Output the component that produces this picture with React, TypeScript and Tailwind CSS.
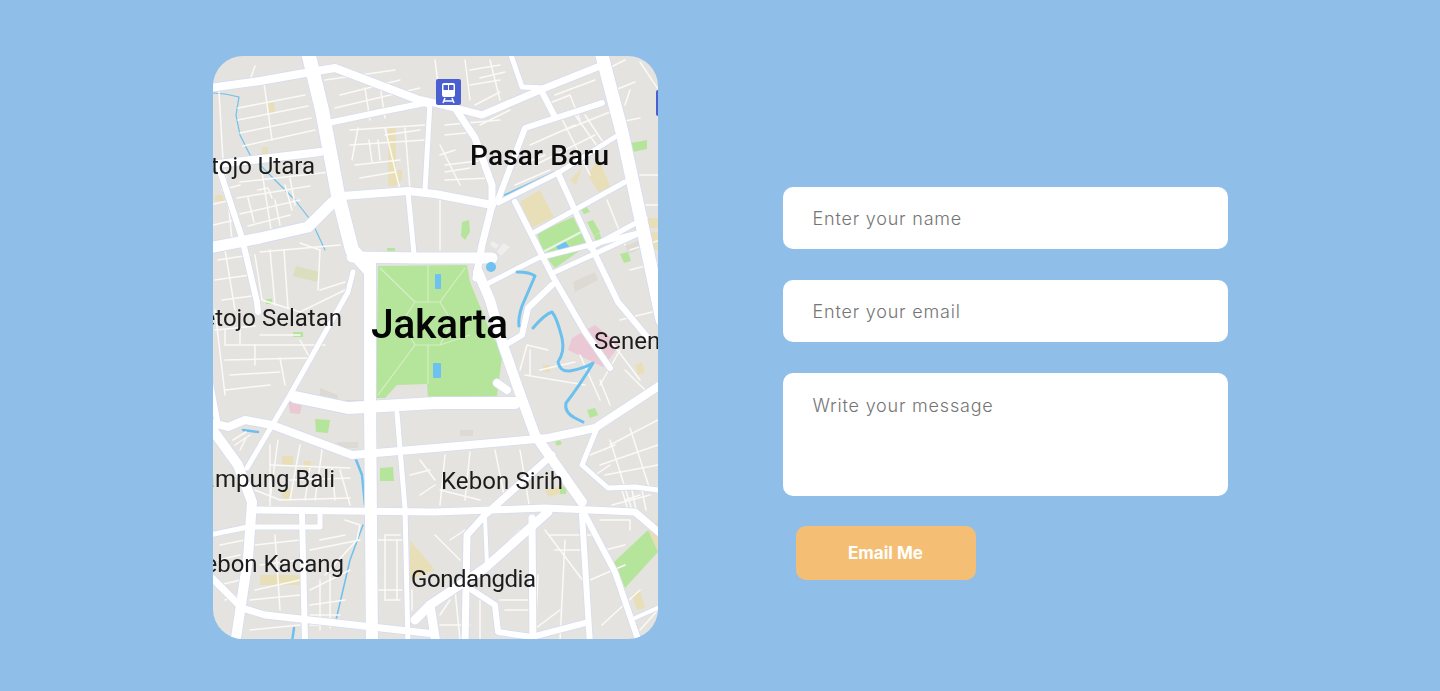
const majorRoads: [string, number][] = [
  ["308,52 322,110 338,195 352,250 368,268", 14],
  ["352,257 420,258 492,258", 11],
  ["370,258 370,400 371,520 372,645", 12],
  ["209,88 260,81 305,73 335,68 427,103", 8],
  ["328,123 380,112 425,103", 6],
  ["209,248 260,238 308,227 333,202", 11],
  ["320,152 270,158 209,165", 8],
  ["218,165 242,238 257,302 258,312", 6],
  ["342,196 408,191 435,194 492,205", 8],
  ["408,192 414,254", 5],
  ["430,102 425,190", 5],
  ["601,52 622,132 642,225 662,320", 13],
  ["422,100 455,108 482,115 545,88 600,66", 7],
  ["455,108 475,138 492,185 492,205 482,245 476,278", 7],
  ["510,52 522,87 545,88", 5],
  ["542,92 555,117", 6],
  ["498,200 525,128 602,103", 6],
  ["498,203 558,173 615,137", 5],
  ["515,202 552,275 585,332 610,368", 6],
  ["558,173 592,248 618,302 648,338", 6],
  ["535,232 625,182", 5],
  ["485,285 538,258 642,232", 5],
  ["590,248 645,218", 5],
  ["555,272 640,233", 5],
  ["552,285 528,308 522,335 505,345", 6],
  ["662,384 595,428 548,438 435,448 352,455 272,425 245,420 228,427 209,422", 8],
  ["478,272 490,300 503,345 518,388 535,435 582,502", 10],
  ["295,397 348,408 435,403 515,403", 12],
  ["497,383 507,390", 8],
  ["209,535 248,527 320,527 320,510", 5],
  ["257,510 435,512 545,508 635,512 662,535", 7],
  ["552,455 485,515 467,535 465,645", 7],
  ["548,512 485,568 430,605", 9],
  ["532,518 533,645", 7],
  ["485,518 487,565", 4],
  ["582,515 590,645", 6],
  ["585,515 615,572 640,645", 6],
  ["472,590 495,605 498,632 532,637 585,623", 6],
  ["597,428 582,465 608,488 635,487 658,490", 5],
  ["662,606 635,618", 4],
  ["209,378 218,425", 6],
  ["209,425 238,465 252,502 248,558 235,645", 10],
  ["302,515 305,640", 6],
  ["209,575 242,608 265,615 435,634", 7],
  ["397,413 405,508 408,645", 5],
  ["353,272 348,292 322,338 290,395 247,468", 5],
  ["415,620 430,605 437,650", 9],
];

const minorStreets = [
  "238,108 305,95", "238,120 308,106", "240,133 311,118", "243,146 315,130", "264,83 272,140", "219,92 223,160",
  "250,80 255,66", "325,80 395,70", "340,95 400,80", "335,108 420,88", "365,88 370,120", "380,85 385,118",
  "350,130 425,125", "350,145 425,140", "385,128 400,190", "355,165 400,160", "360,178 395,172", "420,130 385,135",
  "358,128 352,160", "369,140 372,162", "378,140 380,160", "405,128 410,190",
  "240,182 330,172", "237,198 310,186", "240,214 300,200", "248,226 290,215", "262,172 272,236", "290,178 295,205", "222,190 240,185", "210,205 232,200", "213,225 235,220",
  "258,190 268,188 272,198", "285,185 292,210", "248,198 254,222", "275,200 280,225", "225,170 232,240",
  "260,252 340,245", "300,243 320,250", "320,250 318,290", "255,255 262,300", "270,250 275,305", "284,250 288,308", "262,300 300,312", "300,312 345,290", "320,290 345,282", "218,260 250,255", "215,280 250,275", "222,300 252,296", "225,250 235,310", "215,330 255,326",
  "435,60 440,100", "465,60 470,100", "470,70 500,65", "470,85 500,80", "475,105 500,92", "480,125 510,110", "445,125 500,120", "445,135 475,132", "490,60 500,100", "480,78 505,72",
  "545,105 570,95 580,120", "555,95 595,80", "605,70 625,60", "615,90 635,82", "620,122 640,118", "625,105 630,90", "640,62 660,92",
  "565,130 615,110", "560,115 590,175", "575,115 600,150", "585,115 605,145", "530,145 575,125", "535,165 595,135", "590,110 603,100",
  "440,145 460,185", "445,165 485,160", "445,180 490,178", "440,200 440,250", "520,165 545,155", "515,185 550,170", "440,155 455,150", "445,172 470,168",
  "607,200 625,245", "640,175 660,175", "638,205 660,205", "630,250 660,240", "620,320 660,310", "630,270 660,262",
  "225,345 325,345", "225,360 310,358", "230,375 280,372", "225,390 270,385", "255,345 255,365", "280,358 285,385", "215,310 225,395", "240,320 240,345", "260,335 300,335", "300,340 310,358", "225,330 225,345",
  "278,440 270,500", "300,445 290,500", "322,450 315,500", "270,465 350,468", "290,480 350,478", "280,500 350,498", "340,470 350,505", "255,490 280,500", "270,445 270,510", "310,468 305,500", "332,468 335,500",
  "233,440 246,432", "235,445 250,435", "240,450 246,438",
  "255,545 300,540", "260,565 300,560", "255,590 300,580", "250,600 300,595", "275,535 280,610", "320,540 345,535", "310,550 360,540", "345,520 360,525 357,540 325,575",
  "220,545 245,540", "218,560 240,555", "220,585 240,580", "225,600 240,595", "310,590 350,570", "310,605 345,600", "310,615 340,615", "310,625 335,625", "320,580 320,630", "330,575 330,628",
  "385,535 400,535", "385,535 385,600 400,600", "397,540 397,600", "410,475 430,470", "420,460 435,480", "420,495 435,485",
  "525,375 585,385", "540,370 575,362", "530,350 530,375", "610,340 640,380", "620,350 600,385", "600,380 610,405", "580,355 600,400", "520,370 527,345 548,350", "625,370 650,395",
  "445,455 440,505", "470,452 465,500", "495,450 505,500", "520,450 530,510", "610,445 658,420", "600,465 658,445", "605,475 658,465", "610,440 632,510", "630,428 650,490", "595,475 610,465", "590,455 615,445",
  "440,490 480,500", "625,500 640,495", "612,505 650,495", "622,490 628,510", "632,490 636,510", "642,490 646,510",
  "545,530 590,590", "550,535 595,535", "555,550 580,550", "565,540 560,640", "590,580 625,565", "602,625 640,590", "605,550 625,545", "520,530 470,580", "500,600 530,600", "538,575 535,640", "560,610 520,640", "640,630 658,610", "600,520 630,520 630,530",
  "435,535 460,560", "450,540 465,530", "440,625 470,625", "505,610 535,610", "455,590 460,640", "480,600 480,640",
  "250,630 300,625", "378,540 402,540", "378,590 402,590", "440,615 450,600", "412,590 412,610",
];

const buildings: [string, string][] = [
  ["#e8dfb9", "268,103 274,103 275,114 269,114"],
  ["#e8dfb9", "388,128 396,128 396,170 402,170 402,180 396,186 388,186"],
  ["#e8dfb9", "262,147 268,147 268,154 262,154"],
  ["#e8dfb9", "215,195 222,195 224,201 215,201"],
  ["#e8dfb9", "520,202 540,190 554,217 532,228"],
  ["#e8dfb9", "588,175 598,158 612,190 600,195"],
  ["#e8dfb9", "570,180 582,168 576,185"],
  ["#e8dfb9", "648,218 660,218 660,228 648,228"],
  ["#e8dfb9", "650,232 660,232 660,250 652,250"],
  ["#e8dfb9", "282,456 293,456 293,465 282,465"],
  ["#e8dfb9", "304,461 311,461 311,468 304,468"],
  ["#e8dfb9", "286,489 293,491 288,500 281,496"],
  ["#e8dfb9", "260,575 301,575 301,585 260,585"],
  ["#e8dfb9", "410,540 435,570 410,580"],
  ["#e8dfb9", "545,490 565,485 568,492 548,497"],
  ["#e8dfb9", "642,540 658,520 658,552"],
  ["#e8dfb9", "632,595 640,590 645,608 637,610"],
  ["#e8dfb9", "543,365 550,365 550,372 543,372"],
  ["#e8dfb9", "635,365 642,362 645,372 638,375"],
  ["#dcdfbf", "296,266 320,272 317,282 293,276"],
  ["#ebc9d4", "572,338 595,325 620,345 603,367 568,350"],
  ["#ebc9d4", "288,401 303,399 300,414 290,413"],
  ["#dcd9d2", "320,388 338,395 337,405 320,400"],
  ["#dcd9d2", "340,400 365,400 365,412 340,412"],
  ["#dddad4", "337,442 358,442 358,448 337,448"],
  ["#dddad4", "573,282 595,272 598,280 575,292"],
  ["#dddad4", "460,430 473,430 473,436 460,436"],
  ["#dddad4", "625,246 640,240 640,248 630,254"],
  ["#eeeeef", "492,241 499,245 496,249 490,245"],
  ["#eeeeef", "503,243 510,247 501,256 497,252"],
  ["#b5e59b", "462,222 469,220 470,232 465,240 461,236"],
  ["#b5e59b", "537,233 573,217 588,245 555,268 543,253"],
  ["#b5e59b", "580,208 586,206 590,212 584,214"],
  ["#b5e59b", "587,222 593,220 600,232 594,236"],
  ["#b5e59b", "594,236 600,233 602,243 597,245"],
  ["#b5e59b", "620,254 628,252 631,261 624,263"],
  ["#b5e59b", "631,143 647,140 647,149 633,152"],
  ["#b5e59b", "387,248 395,248 395,251 387,251"],
  ["#b5e59b", "266,299 272,299 272,304 266,304"],
  ["#b5e59b", "293,332 303,332 303,337 293,337"],
  ["#b5e59b", "315,419 330,420 328,433 316,432"],
  ["#b5e59b", "380,468 393,467 394,481 380,481"],
  ["#b5e59b", "587,410 595,408 598,415 590,418"],
  ["#b5e59b", "560,488 566,486 566,494 560,494"],
  ["#b5e59b", "614,562 648,530 658,552 625,588"],
  ["#b5e59b", "555,442 560,440 562,444 557,446"],
];

function StationIcon() {
  return (
    <g>
      <rect x="436" y="79" width="25" height="26" rx="2" fill="#4a5fd0" />
      <rect x="442" y="83" width="13" height="14" rx="2" fill="#fff" />
      <rect x="443.5" y="85" width="4.5" height="5" fill="#4a5fd0" />
      <rect x="449" y="85" width="4.5" height="5" fill="#4a5fd0" />
      <path d="M443 103 L445 98 M454 103 L452 98 M444 101 H453" stroke="#fff" strokeWidth="1.5" fill="none" />
    </g>
  );
}

function CityMap() {
  const labelClass = "font-['Roboto'] fill-[#1c1c1c]";
  return (
    <div className="w-[445px] h-[583px] rounded-[30px] overflow-hidden shrink-0 bg-[#e5e3df]">
      <svg viewBox="213 56 445 583" width="445" height="583" className="block blur-[0.4px]">
        {buildings.map(([fill, points], i) => (
          <polygon key={`building_${i}`} points={points} fill={fill} />
        ))}

        <polygon points="378,266 467,265 470,282 493,338 503,350 497,396 428,398 427,384 397,385 385,398 376,398" fill="#b5e59b" />
        <path d="M380 268 L415 302 M465 268 L440 302 M378 395 L415 345 M470 335 L440 345 M415 302 H440 L452 322 L440 345 H415 L402 322 Z M428 265 V302 M428 345 V384" stroke="#d5efc6" strokeWidth="1.2" fill="none" />
        <rect x="435" y="274" width="6" height="15" rx="1" fill="#6ec1f0" />
        <rect x="433" y="363" width="8" height="15" rx="1" fill="#6ec1f0" />
        <path d="M555 245 L565 241 L570 248 L560 252 Z" fill="#6ec1f0" />
        <path d="M543 252 L585 230" stroke="#e8f3e2" strokeWidth="2.5" />

        <g fill="none" strokeLinejoin="round" strokeLinecap="round">
          <polyline points="213,93 225,94 239,97 236,115 240,135 250,155 275,180 295,200 312,222 325,250" stroke="#6cc0ee" strokeWidth="1.2" />
          <polyline points="505,195 555,172" stroke="#6cc0ee" strokeWidth="2" />
          <polyline points="355,457 362,475 365,505" stroke="#6cc0ee" strokeWidth="2.5" />
          <polyline points="363,525 350,560 336,620" stroke="#6cc0ee" strokeWidth="1.5" />
          <polyline points="243,430 258,432" stroke="#6cc0ee" strokeWidth="2.5" />
          <polyline points="294,628 292,642" stroke="#6cc0ee" strokeWidth="2.5" />

          {minorStreets.map((points, i) => (
            <polyline key={`street_${i}`} points={points} stroke="#fafaf8" strokeWidth="1.5" />
          ))}
          {majorRoads.map(([points, w], i) => (
            <polyline key={`casing_${i}`} points={points} stroke="#d5dcf1" strokeWidth={w + 1.6} />
          ))}
          {majorRoads.map(([points, w], i) => (
            <polyline key={`road_${i}`} points={points} stroke="#ffffff" strokeWidth={w} />
          ))}
          <path d="M517 272 Q530 272 535 276 Q528 292 522 306 Q518 318 519 326" stroke="#6cc0ee" strokeWidth="3" />
          <path d="M533 328 Q545 314 552 312 Q557 318 562 338 Q565 352 558 362 Q560 372 570 371 Q585 368 593 363 Q580 385 566 403 Q564 412 575 418 L583 422" stroke="#6cc0ee" strokeWidth="3" />
        </g>
        <circle cx="491" cy="267" r="5" fill="#6ec1f0" />

        <StationIcon />
        <rect x="656" y="90" width="8" height="26" rx="2" fill="#4a5fd0" />

        <text x="315" y="174" textAnchor="end" fontSize="24" className={labelClass}>Petojo Utara</text>
        <text x="470" y="165" fontSize="28" fontWeight="500" textLength="139" className="font-['Roboto'] fill-[#0c0c0c]">Pasar Baru</text>
        <text x="342" y="326" textAnchor="end" fontSize="24" className={labelClass}>Petojo Selatan</text>
        <text x="371" y="338" fontSize="41" fontWeight="500" textLength="137" className="font-['Roboto'] fill-[#050505]">Jakarta</text>
        <text x="594" y="349" fontSize="24" className={labelClass}>Senen</text>
        <text x="335" y="487" textAnchor="end" fontSize="24" className={labelClass}>Kampung Bali</text>
        <text x="441" y="489" fontSize="24" textLength="122" className={labelClass}>Kebon Sirih</text>
        <text x="344" y="572" textAnchor="end" fontSize="24" className={labelClass}>Kebon Kacang</text>
        <text x="411" y="587" fontSize="24" textLength="125" className={labelClass}>Gondangdia</text>
      </svg>
    </div>
  );
}

export default function App() {
  const fieldClass = "w-full bg-white rounded-[10px] px-[30px] text-[18px] tracking-[0.8px] font-['Inter',sans-serif] font-[350] text-[#333] placeholder:text-[#757575] outline-none";
  return (
    <main className="min-h-[691px] bg-[#8fbfe8] flex items-start justify-center gap-[125px] pt-[56px]">
      <CityMap />
      <form className="w-[445px] mt-[131px] flex flex-col gap-[31px] font-['Inter',sans-serif]">
        <input type="text" name="name" placeholder="Enter your name" className={`${fieldClass} h-[62px]`} />
        <input type="email" name="email" placeholder="Enter your email" className={`${fieldClass} h-[62px]`} />
        <textarea name="message" placeholder="Write your message" className={`${fieldClass} h-[123px] pt-[19px] resize-none block`} />
        <button type="button" className="ml-[13px] -mt-[1px] w-[180px] h-[54px] pt-[1px] rounded-[10px] bg-[#f4bf75] text-white text-[17px] font-bold">
          Email Me
        </button>
      </form>
    </main>
  );
}
